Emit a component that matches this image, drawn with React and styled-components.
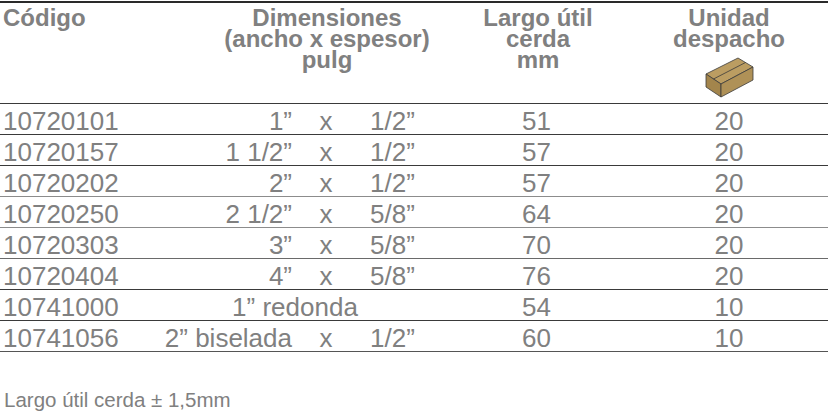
import React from "react";
import styled, { createGlobalStyle } from "styled-components";

const rows = [
  { code: "10720101", a: "1”", b: "1/2”", largo: "51", unidad: "20", line: "#3a3a3a" },
  { code: "10720157", a: "1 1/2”", b: "1/2”", largo: "57", unidad: "20", line: "#3a3a3a" },
  { code: "10720202", a: "2”", b: "1/2”", largo: "57", unidad: "20", line: "#8c8c8c" },
  { code: "10720250", a: "2 1/2”", b: "5/8”", largo: "64", unidad: "20", line: "#8c8c8c" },
  { code: "10720303", a: "3”", b: "5/8”", largo: "70", unidad: "20", line: "#6a6a6a" },
  { code: "10720404", a: "4”", b: "5/8”", largo: "76", unidad: "20", line: "#3a3a3a" },
  { code: "10741000", full: "1” redonda", largo: "54", unidad: "10", line: "#3a3a3a" },
  { code: "10741056", a: "2” biselada", b: "1/2”", largo: "60", unidad: "10", line: "#555555" },
];

function BoxIcon() {
  return (
    <svg width="49" height="41" viewBox="0 0 49 41">
      <g stroke="#3b3b3b" strokeWidth="0.8" strokeLinejoin="round">
        <polygon points="1,17 33,1 48,10 16,27" fill="#bb9d62" />
        <polygon points="1,17 16,27 16,40 1,30" fill="#a3854c" />
        <polygon points="16,27 48,10 48,23 16,40" fill="#af9157" />
        <line x1="8.5" y1="22" x2="40.5" y2="5.5" />
      </g>
    </svg>
  );
}

export default function App() {
  return (
    <>
      <GlobalStyle />
      <Page>
        <Table>
          <Header>
            <HeadCell>Código</HeadCell>
            <HeadCell $center $pad="44px">
              <HeadLine>Dimensiones</HeadLine>
              <HeadLine>(ancho x espesor)</HeadLine>
              <HeadLine>pulg</HeadLine>
            </HeadCell>
            <HeadCell $center $pad="6px">
              <HeadLine>Largo útil</HeadLine>
              <HeadLine>cerda</HeadLine>
              <HeadLine>mm</HeadLine>
            </HeadCell>
            <HeadCell $center $pad="20px">
              <HeadLine>Unidad</HeadLine>
              <HeadLine>despacho</HeadLine>
              <IconWrap>
                <BoxIcon />
              </IconWrap>
            </HeadCell>
          </Header>
          {rows.map((r) => (
            <Row key={r.code} $line={r.line}>
              <Cell>{r.code}</Cell>
              {r.full ? (
                <DimFull>{r.full}</DimFull>
              ) : (
                <Dim>
                  <DimA>{r.a}</DimA>
                  <DimX>x</DimX>
                  <DimB>{r.b}</DimB>
                </Dim>
              )}
              <Cell $center>{r.largo}</Cell>
              <Cell $center $pad="20px">
                {r.unidad}
              </Cell>
            </Row>
          ))}
        </Table>
        <Note>Largo útil cerda ± 1,5mm</Note>
      </Page>
    </>
  );
}

const GlobalStyle = createGlobalStyle`
  body {
    margin: 0;
    background: #ffffff;
    font-family: "Liberation Sans", Arial, sans-serif;
    color: #808080;
  }
`;

const Page = styled.div`
  width: 828px;
  height: 411px;
  padding-top: 1px;
  box-sizing: border-box;
  overflow: hidden;
`;

const Table = styled.div`
  display: flex;
  flex-direction: column;
`;

const Header = styled.div`
  display: grid;
  grid-template-columns: 150px 310px 150px 218px;
  box-sizing: border-box;
  height: 103px;
  border-top: 2px solid #2a2a2a;
  border-bottom: 1px solid #3a3a3a;
  padding-top: 4px;
`;

const HeadCell = styled.div`
  font-size: 24px;
  font-weight: 700;
  line-height: 21px;
  padding-left: ${(p) => p.$pad || "3px"};
  text-align: ${(p) => (p.$center ? "center" : "left")};
  white-space: nowrap;
`;

const HeadLine = styled.div`
  height: 21px;
`;

const IconWrap = styled.div`
  display: flex;
  justify-content: center;
  margin-top: 8px;
`;

const Row = styled.div`
  display: grid;
  grid-template-columns: 150px 310px 150px 218px;
  height: 30px;
  border-bottom: 1px solid ${(p) => p.$line};
  font-size: 26px;
  line-height: 34px;
  white-space: nowrap;
`;

const Cell = styled.div`
  padding-left: ${(p) => p.$pad || "3px"};
  text-align: ${(p) => (p.$center ? "center" : "left")};
`;

const Dim = styled.div`
  display: grid;
  grid-template-columns: 142px 68px 1fr;
`;

const DimA = styled.div`
  text-align: right;
`;

const DimX = styled.div`
  text-align: center;
`;

const DimB = styled.div`
  padding-left: 10px;
`;

const DimFull = styled.div`
  width: 290px;
  text-align: center;
`;

const Note = styled.div`
  margin-top: 36px;
  padding-left: 4px;
  font-size: 20.5px;
  line-height: 23px;
`;
